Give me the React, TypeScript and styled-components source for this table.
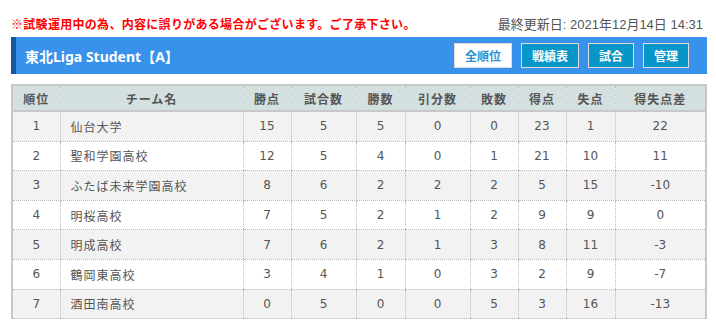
import React from 'react'
import styled, { createGlobalStyle } from 'styled-components'

const GlobalStyle = createGlobalStyle`
  body {
    margin: 0;
    background: #fff;
    font-family: "Noto Sans", "Noto Sans CJK JP", sans-serif;
  }
`

const Page = styled.div`
  padding: 0 9px 0 11px;
`

const NoticeRow = styled.div`
  display: flex;
  justify-content: space-between;
  align-items: center;
  height: 16px;
  padding-top: 15px;
  padding-right: 4px;
`

const Notice = styled.span`
  font-size: 12px;
  font-weight: 700;
  letter-spacing: 0.3px;
  color: #ff0000;
  font-family: "Noto Sans CJK JP", sans-serif;
`

const Updated = styled.span`
  font-size: 13px;
  color: #555;
  font-family: "Liberation Sans", "Noto Sans CJK JP", sans-serif;
`

const TitleBar = styled.div`
  display: flex;
  align-items: center;
  justify-content: space-between;
  height: 37px;
  margin-top: 6px;
  background: #3891ea;
  border-left: 5px solid #12599f;
  padding: 0 18px 0 9px;
`

const Title = styled.h2`
  margin: 0;
  font-size: 14px;
  font-weight: 700;
  color: #fff;
  font-family: "Noto Sans", "Noto Sans CJK JP", sans-serif;
`

const Nav = styled.div`
  display: flex;
  gap: 9px;
`

const NavButton = styled.button<{ $active?: boolean }>`
  height: 25px;
  padding: 0 10px;
  border: 1px solid #dcdcdc;
  background: ${p => (p.$active ? '#fff' : '#0896c8')};
  color: ${p => (p.$active ? '#2b8fd2' : '#fff')};
  font-size: 12px;
  font-weight: 700;
  font-family: "Noto Sans CJK JP", sans-serif;
  cursor: pointer;
`

const Table = styled.table`
  width: 100%;
  margin-top: 10px;
  border-collapse: collapse;
  border: 2px solid #c8c8c8;
  border-bottom: none;
  table-layout: fixed;
`

const Col = styled.col<{ $w?: number }>`
  width: ${p => (p.$w ? `${p.$w}px` : 'auto')};
`

const Th = styled.th`
  height: 24px;
  padding: 0;
  background: #d4dfdf;
  color: #555;
  font-size: 12px;
  font-weight: 700;
  font-family: "Noto Sans CJK JP", sans-serif;
  letter-spacing: 1px;
  overflow: hidden;
  border-left: 1px dotted #bbb;
  border-bottom: 2px solid #c8c8c8;
  &:first-child {
    border-left: none;
  }
`

const Tr = styled.tr`
  &:nth-child(odd) {
    background: #f2f2f2;
  }
  &:nth-child(even) {
    background: #fff;
  }
`

const Td = styled.td<{ $left?: boolean }>`
  height: 28.6px;
  padding: 0 ${p => (p.$left ? '10px' : '0')};
  text-align: ${p => (p.$left ? 'left' : 'center')};
  color: #555;
  font-size: 12px;
  font-family: ${p =>
    p.$left ? '"Noto Sans CJK JP", sans-serif' : '"DejaVu Sans", "Noto Sans CJK JP", sans-serif'};
  letter-spacing: ${p => (p.$left ? '1px' : '0')};
  border-left: 1px dotted #bbb;
  border-bottom: 1px dotted #bbb;
  &:first-child {
    border-left: none;
  }
`

const columns = [
  { label: '順位', w: 49 },
  { label: 'チーム名', w: 184 },
  { label: '勝点', w: 49 },
  { label: '試合数', w: 66 },
  { label: '勝数', w: 50 },
  { label: '引分数', w: 66 },
  { label: '敗数', w: 49 },
  { label: '得点', w: 49 },
  { label: '失点', w: 50 },
  { label: '得失点差', w: 0 },
]

const standings = [
  [1, '仙台大学', 15, 5, 5, 0, 0, 23, 1, 22],
  [2, '聖和学園高校', 12, 5, 4, 0, 1, 21, 10, 11],
  [3, 'ふたば未来学園高校', 8, 6, 2, 2, 2, 5, 15, -10],
  [4, '明桜高校', 7, 5, 2, 1, 2, 9, 9, 0],
  [5, '明成高校', 7, 6, 2, 1, 3, 8, 11, -3],
  [6, '鶴岡東高校', 3, 4, 1, 0, 3, 2, 9, -7],
  [7, '酒田南高校', 0, 5, 0, 0, 5, 3, 16, -13],
]

const App: React.FC = () => {
  return (
    <Page>
      <GlobalStyle />
      <NoticeRow>
        <Notice>※試験運用中の為、内容に誤りがある場合がございます。ご了承下さい。</Notice>
        <Updated>最終更新日: 2021年12月14日 14:31</Updated>
      </NoticeRow>

      <TitleBar>
        <Title>東北Liga Student【A】</Title>
        <Nav>
          <NavButton $active>全順位</NavButton>
          <NavButton>戦績表</NavButton>
          <NavButton>試合</NavButton>
          <NavButton>管理</NavButton>
        </Nav>
      </TitleBar>

      <Table>
        <colgroup>
          {columns.map(c => (
            <Col key={c.label} $w={c.w ? c.w - 1 : undefined} />
          ))}
        </colgroup>
        <thead>
          <tr>
            {columns.map(c => (
              <Th key={c.label}>{c.label}</Th>
            ))}
          </tr>
        </thead>
        <tbody>
          {standings.map(row => (
            <Tr key={row[0]}>
              {row.map((cell, i) => (
                <Td key={i} $left={i === 1}>{cell}</Td>
              ))}
            </Tr>
          ))}
        </tbody>
      </Table>
    </Page>
  )
}

export default App
